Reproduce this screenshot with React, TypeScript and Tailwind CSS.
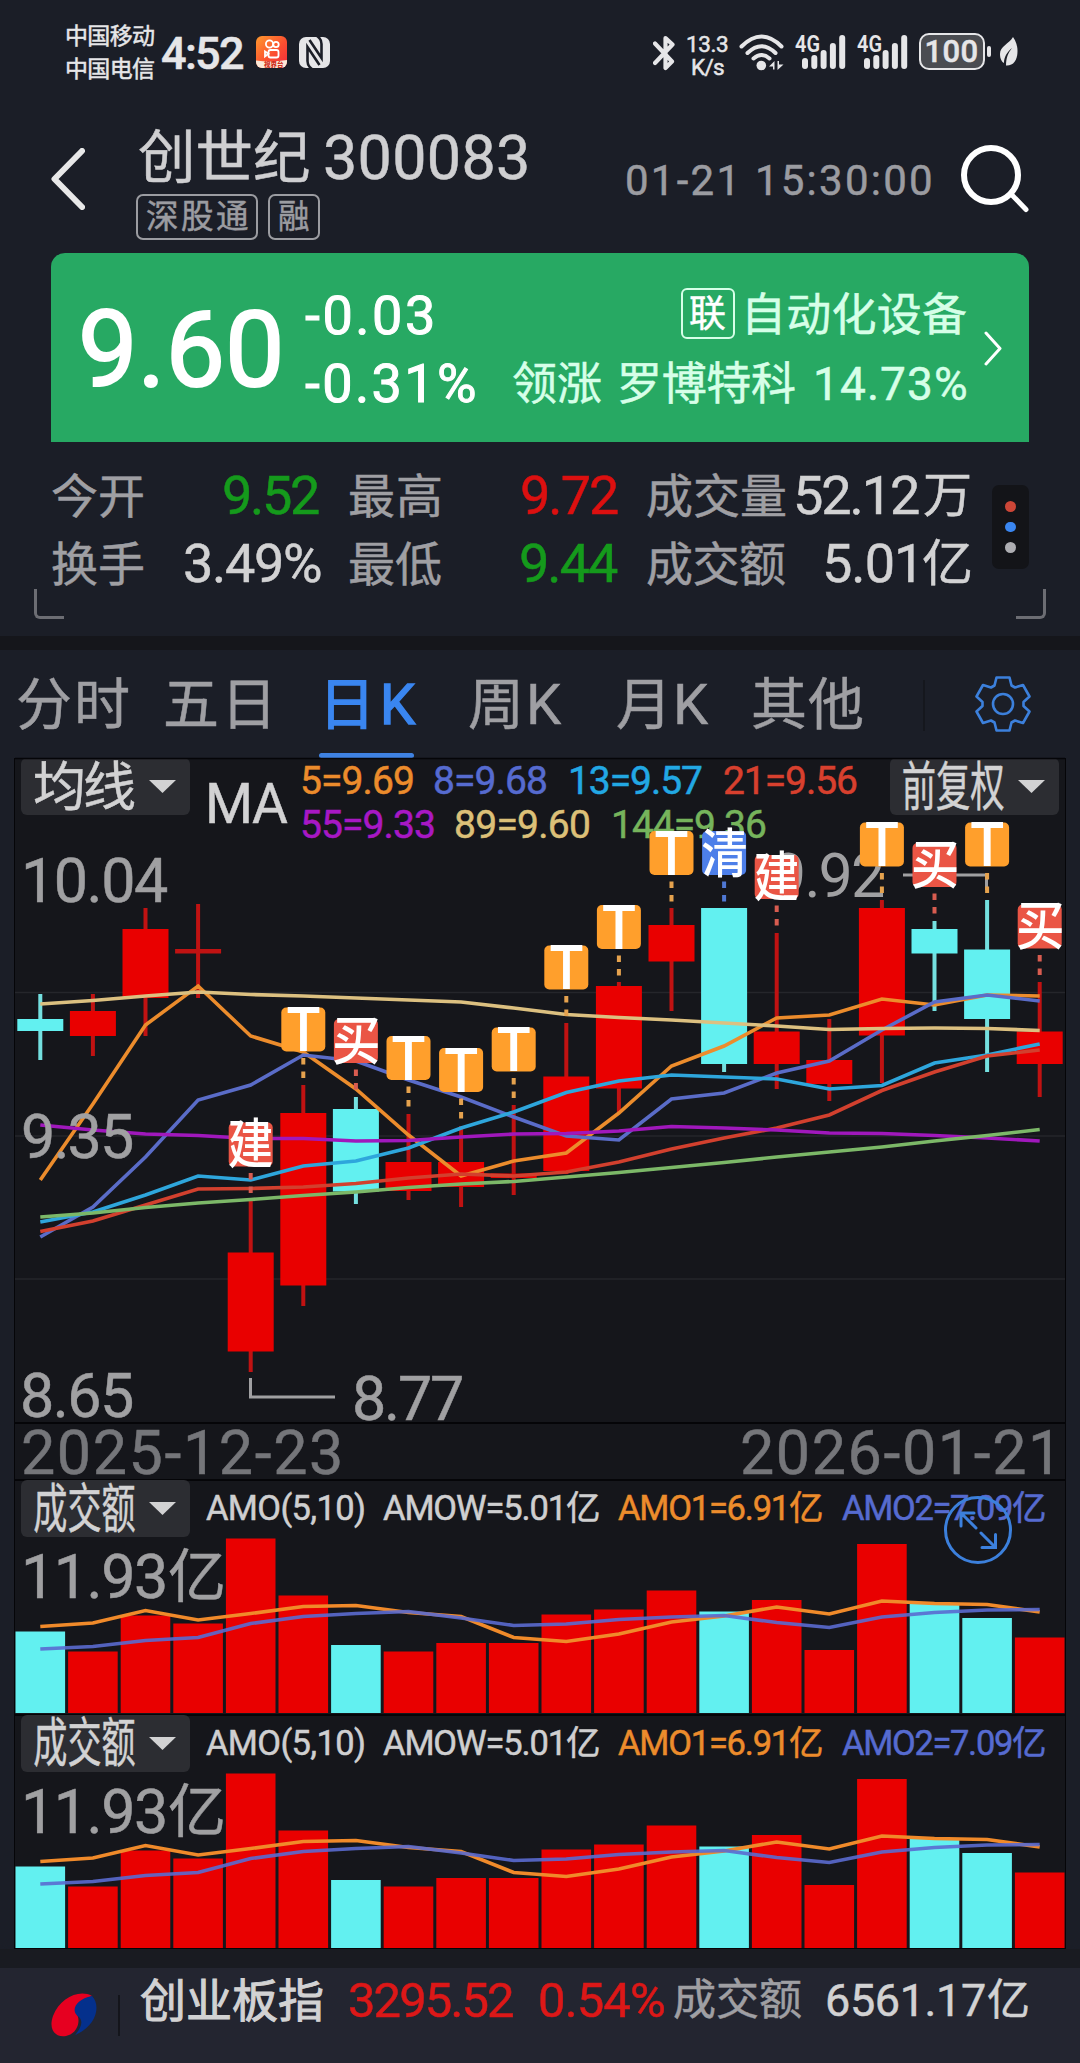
import React, { useLayoutEffect, useRef, useState } from "react";

const FAMILY = '"Roboto", "Noto Sans CJK SC", sans-serif';

function inkOf(text: string, font: string) {
  const ctx = document.createElement("canvas").getContext("2d")!;
  ctx.font = font;
  const m = ctx.measureText(text);
  return { left: m.actualBoundingBoxLeft, width: m.actualBoundingBoxLeft + m.actualBoundingBoxRight };
}

/* A single line of text spread (or squeezed) over the width of its box. */
function Fit({ children, className = "", squeeze = false }: { children: string; className?: string; squeeze?: boolean }) {
  const ref = useRef<HTMLDivElement>(null);
  const [style, setStyle] = useState<React.CSSProperties>({});
  useLayoutEffect(() => {
    const el = ref.current!;
    const cs = getComputedStyle(el);
    const ink = inkOf(children, `${cs.fontWeight} ${cs.fontSize} ${FAMILY}`);
    const target = el.clientWidth;
    if (squeeze) {
      const k = target / ink.width;
      setStyle({ transform: `translateX(${ink.left * k}px) scaleX(${k})` });
    } else {
      const n = Math.max(1, Array.from(children).length - 1);
      setStyle({ letterSpacing: (target - ink.width) / n, marginLeft: ink.left });
    }
  }, [children, squeeze]);
  return (
    <div ref={ref} className={`shrink-0 whitespace-pre leading-none ${className}`}>
      <span className="block w-max origin-left" style={style}>{children}</span>
    </div>
  );
}

/* The same for labels inside a chart. y is the baseline. */
function Label({ x, y, w, size, fill, weight = 400, squeeze = false, children }: {
  x: number; y: number; w: number; size: number; fill: string; weight?: number; squeeze?: boolean; children: string;
}) {
  const ink = inkOf(children, `${weight} ${size}px ${FAMILY}`);
  if (squeeze) {
    const k = w / ink.width;
    return (
      <text transform={`translate(${x + ink.left * k} ${y}) scale(${k} 1)`} fontSize={size} fontWeight={weight} fill={fill}>{children}</text>
    );
  }
  const n = Math.max(1, Array.from(children).length - 1);
  return (
    <text x={x + ink.left} y={y} fontSize={size} fontWeight={weight} fill={fill} letterSpacing={(w - ink.width) / n}>{children}</text>
  );
}

const RED = "#e90000";
const CYAN = "#62f0f0";
const cx = (i: number) => 40.3 + 52.6 * i;
const pts = (ys: number[]) => ys.map((y, i) => `${cx(i)},${y}`).join(" ");

// wick top, wick bottom, body top, body bottom, falling
const candles: [number, number, number, number, number][] = [
  [994, 1060, 1019, 1031, 1], [994, 1056, 1011, 1036, 0], [908, 1036, 929, 998, 0], [904, 998, 949, 953.5, 0],
  [1199, 1372, 1252.5, 1351.5, 0], [1085, 1306, 1113, 1285.5, 0], [1097, 1204, 1109, 1191.5, 1], [1114, 1200, 1162, 1191, 0],
  [1126, 1207, 1162, 1187, 0], [1105, 1195, 1173.5, 1178, 0], [1023, 1174, 1076.5, 1171, 0], [982, 1112, 986, 1088.5, 0],
  [908, 1011, 925, 961.5, 0], [908, 1072, 908, 1064, 1], [933, 1089, 1031.5, 1064, 0], [1019, 1101, 1060, 1084, 0],
  [900, 1083, 908, 1035.5, 0], [921, 1011, 929, 953.5, 1], [900, 1072, 949.5, 1019, 1], [982, 1097, 1031.5, 1064, 0],
];

const averages: [string, number[]][] = [
  ["#ec8c2c", [1180, 1104, 1025, 986, 1036, 1052, 1089, 1135, 1176, 1161, 1153, 1113, 1066, 1046, 1018, 1015, 999, 1005, 995, 996]],
  ["#5a6cc8", [1237, 1207, 1157, 1100, 1085, 1055, 1061, 1080, 1097, 1117, 1136, 1140, 1099, 1093, 1073, 1061, 1030, 1002, 995, 1001]],
  ["#2ea6dc", [1222, 1212, 1195, 1176, 1180, 1166, 1161, 1148, 1128, 1112, 1092.5, 1081, 1075, 1077, 1079, 1089, 1085.5, 1063, 1055, 1044]],
  ["#d2402e", [1231.5, 1221, 1205, 1189, 1188.5, 1187, 1183.5, 1178, 1174, 1176, 1172, 1162, 1149, 1138, 1128, 1115, 1090.5, 1072, 1056, 1050]],
  ["#a018bc", [1125, 1130, 1134, 1135.5, 1138.5, 1138.5, 1141, 1140.5, 1137, 1134, 1133.5, 1131, 1126.5, 1128, 1130, 1133, 1133.5, 1135.5, 1138, 1141]],
  ["#dcc080", [1004, 1000.5, 996, 992, 994.5, 996, 998, 1000, 1002, 1008, 1014.5, 1017.5, 1020, 1023, 1026, 1029.5, 1028.5, 1028, 1028.5, 1030.5]],
  ["#7cb868", [1217, 1213, 1207.5, 1203, 1199.5, 1195.5, 1192, 1187.5, 1184, 1181.5, 1177, 1172.5, 1167.5, 1162.5, 1157, 1152, 1147, 1141, 1135.5, 1129.5]],
];

const markers: [number, number, string][] = [
  [4, 1122.5, "建"], [5, 1007.5, "T"], [6, 1019, "买"], [7, 1036, "T"], [8, 1048, "T"], [9, 1027.5, "T"], [10, 945.5, "T"],
  [11, 905, "T"], [12, 831, "T"], [13, 831, "清"], [14, 855, "建"], [16, 822.5, "T"], [17, 843, "买"], [18, 822.5, "T"], [19, 904.5, "买"],
];

function Marker({ i, y, t }: { i: number; y: number; t: string }) {
  const x = cx(i);
  const [bg, dash] = t === "T" ? ["#ff9f2c", "#e5a24e"] : t === "清" ? ["#4d7fe9", "#4f78d4"] : ["#ea5545", "#d85c50"];
  return (
    <g>
      <rect x={x - 22} y={y} width={44} height={44} rx={5} fill={bg} />
      <rect x={x - 2} y={y + 50.5} width={4} height={6.5} fill={dash} />
      <rect x={x - 2} y={y + 64} width={4} height={6.5} fill={dash} />
      {t === "T" ? (
        <Label x={x - 16} y={y + 43.5} w={32} size={61} weight={500} fill="#fff" squeeze>T</Label>
      ) : (
        <Label x={x - 22} y={y + (t === "买" ? 40.5 : 41.5)} w={44} size={54} weight={500} fill="#fff" squeeze>{t}</Label>
      )}
    </g>
  );
}

const volumes = [1631.5, 1651.5, 1615.5, 1623.5, 1538.5, 1595.5, 1645, 1651.5, 1643, 1643, 1614.5, 1609.5, 1590.5, 1611.5, 1600, 1650, 1544, 1604, 1618, 1637.5];
const volFalling = [0, 6, 13, 17, 18];
const amo1 = [1626.5, 1623, 1610.5, 1620, 1613.5, 1606.5, 1605.5, 1612.5, 1616.5, 1637.5, 1641.5, 1634, 1622, 1616, 1607, 1614, 1601, 1603.5, 1604.5, 1612];
const amo2 = [1649, 1646.5, 1640.5, 1637.5, 1623.5, 1616.5, 1613.5, 1611.5, 1618, 1625.5, 1624, 1619.5, 1617, 1615.5, 1622.5, 1627.5, 1617, 1612.5, 1610, 1609.5];

function Dropdown({ label, squeeze = false, className = "" }: { label: string; squeeze?: boolean; className?: string }) {
  return (
    <div className={`flex h-[57px] w-[169px] shrink-0 items-center rounded-[6px] bg-[#2c2d32] pl-[13px] text-[#d2d2d3] ${className}`}>
      <Fit squeeze={squeeze} className="w-[101px] pt-[3px] text-[53px]">{label}</Fit>
      <svg className="ml-[14px] h-[13px] w-[27px]" viewBox="0 0 27 13"><path d="M0 0H27L13.500 13Z" fill="currentColor" /></svg>
    </div>
  );
}

function VolumePanel() {
  return (
    <section className="relative h-[234.5px] border-t-2 border-[#050508]">
      <div className="-mt-px flex">
        <Dropdown label="成交额" squeeze className="ml-[6px]" />
        <div className="flex h-[57px] items-center">
          <Fit className="ml-[16px] w-[158px] text-[34.500px] text-[#cfcfd0]">AMO(5,10)</Fit>
          <Fit className="ml-[19px] w-[216px] text-[34.500px] text-[#cfcfd0]">AMOW=5.01亿</Fit>
          <Fit className="ml-[19px] w-[204px] text-[34.500px] text-[#ec8c2c]">AMO1=6.91亿</Fit>
          <Fit className="ml-[20px] w-[203px] text-[34.500px] text-[#566bd0]">AMO2=7.09亿</Fit>
        </div>
      </div>
      <svg className="absolute inset-x-0 top-[-2px] h-[235px] w-[1050px]" viewBox="15 1479 1050 235">
        <g stroke="#a0a0a2" strokeWidth={0.5}>
          <Label x={26} y={1598} w={139} size={61} fill="#a0a0a2">11.93</Label>
          <Label x={169} y={1597} w={54} size={58} fill="#a0a0a2" squeeze>亿</Label>
        </g>
        {volumes.map((y, i) => (
          <rect key={i} x={cx(i) - 24.8} y={y} width={49.6} height={1713 - y} fill={volFalling.includes(i) ? CYAN : RED} />
        ))}
        <g fill="none" strokeWidth={3.6}>
          <polyline points={pts(amo1)} stroke="#f08a2a" />
          <polyline points={pts(amo2)} stroke="#5a6ad0" strokeOpacity={0.9} />
        </g>
      </svg>
    </section>
  );
}

function Signal() {
  return (
    <svg className="h-[36px] w-[51px] overflow-visible" viewBox="0 0 51 36" fill="#e6e6e8">
      <text x="0" y="17.500" fontSize="23" fontWeight="600" textLength="25" lengthAdjust="spacingAndGlyphs">4G</text>
      {[24, 21, 16, 9, 1].map((y, k) => <rect key={k} x={7 + k * 9.3} y={y} width="6" height={35 - y} rx="3" />)}
    </svg>
  );
}

function StatusBar() {
  return (
    <div className="flex h-[110px] items-start text-[#e6e6e8]">
      <div className="mt-[25px] ml-[67px]">
        <Fit className="w-[87px] text-[23px] leading-[24px]">中国移动</Fit>
        <Fit className="mt-[10px] w-[87px] text-[23px] leading-[24px]">中国电信</Fit>
      </div>
      <Fit className="mt-[31px] ml-[8px] w-[81px] text-[45px] font-medium">4:52</Fit>
      <svg className="mt-[36px] ml-[13px] h-[32px] w-[31px]" viewBox="0 0 31 32">
        <defs>
          <linearGradient id="ks" x1="0" y1="0" x2="1" y2="1"><stop stopColor="#ff9a2e" /><stop offset=".55" stopColor="#fb4f30" /><stop offset="1" stopColor="#f02a3c" /></linearGradient>
          <clipPath id="kc"><rect width="31" height="32" rx="6" /></clipPath>
        </defs>
        <g clipPath="url(#kc)">
          <rect width="31" height="32" fill="url(#ks)" />
          <path d="M0 24.500Q16 26.500 31 24V32H0Z" fill="#fbe9d8" />
          <text x="8" y="31" fontSize="6.500" fontWeight="900" fill="#d03020">视界台</text>
        </g>
        <g fill="none" stroke="#fff" strokeWidth="1.800">
          <circle cx="13.500" cy="8" r="3.600" /><circle cx="20" cy="8.500" r="2.700" />
          <rect x="12.500" y="14" width="10" height="7.500" rx="2" /><path d="M12.500 17.800L9 15.500V20.500Z" />
        </g>
      </svg>
      <svg className="mt-[37px] ml-[12px] h-[31px] w-[31px]" viewBox="0 0 31 31">
        <rect width="31" height="31" rx="7" fill="#e6e6e8" />
        <path d="M13 32Q8.500 29 8.500 24V10L20.500 28M18 -1Q22.500 2 22.500 7V21L10.500 3" fill="none" stroke="#1b1e27" strokeWidth="2.600" />
      </svg>
      <svg className="mt-[35px] ml-[323px] h-[36px] w-[22px]" viewBox="0 0 22 36" fill="none" stroke="#e6e6e8" strokeWidth="4.200" strokeLinecap="round" strokeLinejoin="round">
        <path d="M2 8.500L19 26.500L12.500 33V3L19.500 9.500L2 28" />
      </svg>
      <div className="mt-[33px] ml-[12px] w-[41px]">
        <Fit className="w-[41px] text-[22.500px] leading-[20px]">13.3</Fit>
        <Fit className="ml-[5px] w-[32px] text-[22.500px] leading-[20px]">K/s</Fit>
      </div>
      <svg className="mt-[34px] ml-[11px] h-[37px] w-[45px]" viewBox="0 0 45 37" fill="none" stroke="#e6e6e8" strokeWidth="4" strokeLinecap="round">
        <path d="M2.500 12.500Q22.500 -7.500 42.500 12.500M8.500 19Q22.500 5.500 36.500 19M14.500 24.500Q22.500 17.500 30.500 24.500" />
        <circle cx="22.300" cy="31.500" r="4.800" fill="#e6e6e8" stroke="none" />
        <path d="M30 32.500L35.500 27V35.500H34V32.500ZM44.500 30.500L38.500 36V27H40V30.500Z" fill="#e6e6e8" stroke="none" />
      </svg>
      <div className="mt-[34px] ml-[11px]"><Signal /></div>
      <div className="mt-[34px] ml-[11px]"><Signal /></div>
      <div className="mt-[33px] ml-[11px] flex h-[37px] w-[66px] items-center justify-center rounded-[10px] border-[2.500px] border-[#e6e6e8] bg-[#4a4c51]">
        <Fit className="w-[51px] text-[31px] font-medium">100</Fit>
      </div>
      <div className="mt-[46px] ml-[2px] h-[11px] w-[4px] rounded-full bg-[#e6e6e8]" />
      <svg className="mt-[37px] ml-[9px] h-[29px] w-[18px]" viewBox="0 0 18 29" fill="#e6e6e8">
        <path d="M13 0C9 7 0 9 0 17C0 22 2 25 4 26C4 20 7 15 12 11C8 16 6 21 6 28.500C13 29 17.500 24 17.500 14C17.500 9 16 4 13 0Z" />
      </svg>
    </div>
  );
}

function Stat({ label, lw, value, color, className }: { label: string; lw: string; value: React.ReactNode; color: string; className: string }) {
  return (
    <div className={`flex items-center justify-between ${className}`}>
      <Fit className={`text-[47px] text-[#9f9fa3] ${lw}`}>{label}</Fit>
      <div className={`flex items-center ${color}`}>{value}</div>
    </div>
  );
}

const GREEN = "text-[#159a1c]";
const UP = "text-[#dc1010]";
const TXT = "text-[#d2d2d3]";

export default function App() {
  return (
    <div className="h-[2063px] w-[1080px] overflow-hidden bg-[#1b1e27] font-['Roboto','Noto_Sans_CJK_SC',sans-serif] leading-none [-webkit-text-stroke:0.5px_currentColor]">
      <StatusBar />

      <header className="flex h-[143px]">
        <svg className="mt-[38px] ml-[51px] h-[62px] w-[34px]" viewBox="0 0 34 62" fill="none" stroke="#e8e8e8" strokeWidth="6" strokeLinecap="round" strokeLinejoin="round"><path d="M31 3L3.500 31L31 59" /></svg>
        <div className="ml-[51px] w-[391px] pt-[17px]">
          <div className="flex h-[62px] items-center pl-[3px] text-[#cfcfd1]">
            <Fit className="w-[170px] pt-[2px] text-[57.500px]">创世纪</Fit>
            <Fit className="ml-[16px] w-[202px] text-[61px]">300083</Fit>
          </div>
          <div className="mt-[5px] flex gap-[10px] text-[#9b9ca1]">
            <div className="flex h-[46px] w-[122px] items-center rounded-[7px] border-2 border-[#9b9ca1] pl-[9px]"><Fit className="w-[101px] pt-px text-[32.500px]">深股通</Fit></div>
            <div className="flex h-[46px] w-[52px] items-center rounded-[7px] border-2 border-[#9b9ca1] pl-[9px]"><Fit squeeze className="w-[30px] pt-px text-[32.500px]">融</Fit></div>
          </div>
        </div>
        <Fit className="mt-[50px] ml-[100px] w-[304px] text-[42px] text-[#9b9ca1]">01-21 15:30:00</Fit>
        <svg className="mt-[35px] ml-[30px] h-[68px] w-[68px]" viewBox="0 0 68 68" fill="none" stroke="#fff" strokeWidth="6" strokeLinecap="round"><circle cx="30" cy="30" r="27" /><path d="M50.500 49.500L65 64.500" strokeWidth="5" /></svg>
      </header>

      <section className="mx-[51px] flex h-[189px] rounded-t-[14px] bg-[#27a963] text-white">
        <Fit className="mt-[44px] ml-[32px] w-[196px] text-[106px] [-webkit-text-stroke:2px_white]">9.60</Fit>
        <div className="ml-[27px] flex flex-col gap-[14px] pt-[36px]">
          <Fit className="w-[126px] text-[54px] [-webkit-text-stroke:1px_white]">-0.03</Fit>
          <Fit className="w-[169px] text-[54px] [-webkit-text-stroke:1px_white]">-0.31%</Fit>
        </div>
        <div className="ml-[39px] flex w-[452px] flex-col items-end pt-[35px] text-[#d6ffe8]">
          <div className="flex items-center">
            <div className="mr-[13px] flex h-[51px] w-[54px] items-center rounded-[6px] border-2 border-[#d6ffe8] pl-[7px] text-white"><Fit squeeze className="w-[35px] pt-[2px] text-[37px]">联</Fit></div>
            <Fit className="w-[218px] pt-[3px] text-[45px]">自动化设备</Fit>
          </div>
          <div className="mt-[22px] flex items-center">
            <Fit className="w-[88px] text-[45px]">领涨</Fit>
            <Fit className="ml-[19px] w-[175px] text-[45px]">罗博特科</Fit>
            <Fit className="ml-[21px] w-[150px] text-[46px]">14.73%</Fit>
          </div>
        </div>
        <svg className="mt-[78px] ml-[18px] h-[35px] w-[18px]" viewBox="0 0 18 35" fill="none" stroke="#fff" strokeWidth="3" strokeLinecap="round" strokeLinejoin="round"><path d="M2 2L16 17.500L2 33" /></svg>
      </section>

      <section className="relative h-[194px]">
        <div className="ml-[52px] grid w-[918px] grid-cols-[269px_268px_323px] gap-x-[29px] pt-[20px]">
          <Stat className="h-[68px]" label="今开" lw="w-[91px]" color={GREEN} value={<Fit className="mr-[2px] w-[95px] text-[54px]">9.52</Fit>} />
          <Stat className="h-[68px]" label="最高" lw="w-[91px]" color={UP} value={<Fit className="w-[96px] text-[54px]">9.72</Fit>} />
          <Stat className="h-[68px]" label="成交量" lw="w-[138px]" color={TXT} value={<><Fit className="w-[122px] text-[54px]">52.12</Fit><Fit squeeze className="ml-[5px] w-[46px] text-[48px]">万</Fit></>} />
          <Stat className="h-[68px]" label="换手" lw="w-[91px]" color={TXT} value={<Fit className="w-[136px] text-[54px]">3.49%</Fit>} />
          <Stat className="h-[68px]" label="最低" lw="w-[91px]" color={GREEN} value={<Fit className="w-[97px] text-[54px]">9.44</Fit>} />
          <Stat className="h-[68px]" label="成交额" lw="w-[138px]" color={TXT} value={<><Fit className="w-[88px] text-[54px]">5.01</Fit><Fit squeeze className="ml-[9px] w-[47px] text-[50px]">亿</Fit></>} />
        </div>
        <div className="absolute top-[43px] left-[992px] flex h-[84px] w-[37px] flex-col items-center justify-center gap-[10px] rounded-[7px] bg-[#131418]">
          <i className="size-[10.500px] rounded-full bg-[#cc4637]" />
          <i className="size-[10.500px] rounded-full bg-[#3a86f0]" />
          <i className="size-[10.500px] rounded-full bg-[#aeaeb2]" />
        </div>
        <div className="absolute top-[147px] left-[34px] size-[30px] rounded-bl-[6px] border-b-[3px] border-l-[3px] border-[#6c6d73]" />
        <div className="absolute top-[147px] left-[1016px] size-[30px] rounded-br-[6px] border-r-[3px] border-b-[3px] border-[#6c6d73]" />
      </section>
      <div className="h-[14px] bg-[#15161b]" />

      <nav className="relative flex h-[108px] text-[#9f9fa3]">
        <div className="flex h-[110px] items-center text-[56px]">
          <Fit className="ml-[18px] w-[110px]">分时</Fit>
          <Fit className="ml-[38px] w-[102px]">五日</Fit>
          <Fit className="ml-[60px] w-[88px] text-[#3a86f0] [-webkit-text-stroke:1.500px_#3a86f0]">日K</Fit>
          <Fit className="ml-[53px] w-[93px]">周K</Fit>
          <Fit className="ml-[55px] w-[92px]">月K</Fit>
          <Fit className="ml-[44px] w-[109px]">其他</Fit>
          <div className="ml-[61px] h-[51px] w-[2px] bg-[#15171d]" />
          <svg className="mb-[3px] ml-[50px] h-[56px] w-[56px]" viewBox="-28 -28 56 56" fill="none" stroke="#3c80dc" strokeWidth="2.600" strokeLinejoin="round">
            <path d="M-6.500 -26.500H6.500L8.500 -18.500L12 -16.500L20 -19L26.500 -7.500L20.500 -2V2L26.500 7.500L20 19L12 16.500L8.500 18.500L6.500 26.500H-6.500L-8.500 18.500L-12 16.500L-20 19L-26.500 7.500L-20.500 2V-2L-26.500 -7.500L-20 -19L-12 -16.500L-8.500 -18.500Z" />
            <circle r="10" />
          </svg>
        </div>
        <div className="absolute bottom-0 left-[319px] h-[5px] w-[95px] rounded-full bg-[#3f82e2]" />
      </nav>

      <main className="relative mx-[14px] h-[1191px] border-x border-[#050508] bg-[#15161b]">
        <section className="relative h-[664px]">
          <div className="flex">
            <Dropdown label="均线" className="ml-[6px]" />
            <Fit className="mt-[19px] ml-[19px] w-[79px] text-[55px] text-[#d2d2d3]">MA</Fit>
            <div className="ml-[14px] w-[588px] pt-[2px] text-[39px]">
              <div className="flex">
                <Fit className="w-[111px] pt-[2px] text-[#ec8c2c]">5=9.69</Fit>
                <Fit className="ml-[22px] w-[111px] pt-[2px] text-[#566bd0]">8=9.68</Fit>
                <Fit className="ml-[25px] w-[131px] pt-[2px] text-[#22a8e4]">13=9.57</Fit>
                <Fit className="ml-[22px] w-[133px] pt-[2px] text-[#d8402e]">21=9.56</Fit>
              </div>
              <div className="flex">
                <Fit className="w-[132px] pt-[5px] text-[#a818c4]">55=9.33</Fit>
                <Fit className="ml-[22px] w-[133px] pt-[5px] text-[#dcc078]">89=9.60</Fit>
                <Fit className="ml-[25px] w-[152px] pt-[5px] text-[#76b45c]">144=9.36</Fit>
              </div>
            </div>
            <Dropdown label="前复权" squeeze />
          </div>
          <svg className="absolute inset-0 h-[664px] w-[1050px] overflow-visible" viewBox="15 758 1050 664">
            <path d="M15 758.500H1065" stroke="#050508" strokeWidth="1.500" />
            <path d="M15 992.500H1065M15 1136H1065M15 1279H1065" stroke="#25262b" strokeWidth="1.500" />
            <Label x={774} y={897} w={110} size={61} fill="#a0a0a2">9.92</Label>
            <path d="M903 875H986.500V890" fill="none" stroke="#a0a0a2" strokeWidth={3} />
            {candles.map(([wt, wb, bt, bb, down], i) => (
              <g key={i}>
                <rect x={cx(i) - 2} y={wt} width={4} height={wb - wt} fill={down ? "#74e0e0" : "#c01212"} />
                <rect x={cx(i) - 23} y={bt} width={46} height={bb - bt} fill={i === 3 ? "#c01212" : down ? CYAN : RED} />
              </g>
            ))}
            {averages.map(([c, ys]) => <polyline key={c} points={pts(ys)} fill="none" stroke={c} strokeWidth={3.6} />)}
            <g stroke="#a0a0a2" strokeWidth={0.5}>
              <Label x={26} y={901.5} w={141} size={61} fill="#a0a0a2">10.04</Label>
              <Label x={23} y={1158} w={109} size={61} fill="#a0a0a2">9.35</Label>
              <Label x={23} y={1416.5} w={109} size={61} fill="#a0a0a2">8.65</Label>
              <Label x={355} y={1420} w={107} size={61} fill="#a0a0a2">8.77</Label>
            </g>
            <path d="M250.500 1378V1397H335" fill="none" stroke="#a0a0a2" strokeWidth={3} />
            {markers.map(([i, y, t]) => <Marker key={i} i={i} y={y} t={t} />)}
          </svg>
        </section>
        <div className="flex h-[57px] items-center justify-between border-t-2 border-[#050508] pt-[3px] pr-[15px] pl-[8px] text-[61px] text-[#75767a]">
          <Fit className="w-[317px]">2025-12-23</Fit>
          <Fit className="w-[308px]">2026-01-21</Fit>
        </div>
        <VolumePanel />
        <VolumePanel />
        <svg className="absolute top-[738px] left-[929px] h-[68px] w-[68px]" viewBox="-34 -34 68 68" fill="none" stroke="#3c80dc" strokeWidth="3">
          <circle r="32.500" />
          <path d="M-2 -2L-17 -17M-17 -4V-17H-4M3 3L17.500 17.500M17.500 4.500V17.500H4" strokeLinecap="round" />
        </svg>
        <div className="h-px bg-[#050508]" />
      </main>

      <div className="h-[19px] bg-[#191b21]" />
      <footer className="flex h-[95px] bg-[#232530]">
        <svg className="mt-[25px] ml-[51px] h-[45px] w-[46px]" viewBox="0 0 46 45">
          <path d="M41 3C28 -4 9 5 2 23C-3 37 5 45 15 43C25 41 29 31 27 24C24 16 23 10 41 3Z" fill="#e60020" />
          <path d="M41 3C50 12 46 33 24 42C31 34 32 28 28 24C19 19 24 6 41 3Z" fill="#04308c" />
        </svg>
        <div className="mt-[27px] ml-[21px] h-[41px] w-[2px] bg-[#14151b]" />
        <div className="flex h-[65px] items-center">
          <Fit className="ml-[21px] w-[181px] text-[46px] text-[#d2d2d3] [-webkit-text-stroke:1px_#d2d2d3]">创业板指</Fit>
          <Fit className="ml-[28px] w-[163px] text-[49px] text-[#dc1818]">3295.52</Fit>
          <Fit className="ml-[27px] w-[124px] text-[49px] text-[#dc1818]">0.54%</Fit>
          <Fit className="ml-[10px] w-[127px] text-[43px] text-[#9f9fa3]">成交额</Fit>
          <Fit className="ml-[26px] w-[158px] text-[45px] text-[#d2d2d3]">6561.17</Fit>
          <Fit squeeze className="ml-[3px] w-[40px] text-[43px] text-[#d2d2d3]">亿</Fit>
        </div>
      </footer>
    </div>
  );
}
